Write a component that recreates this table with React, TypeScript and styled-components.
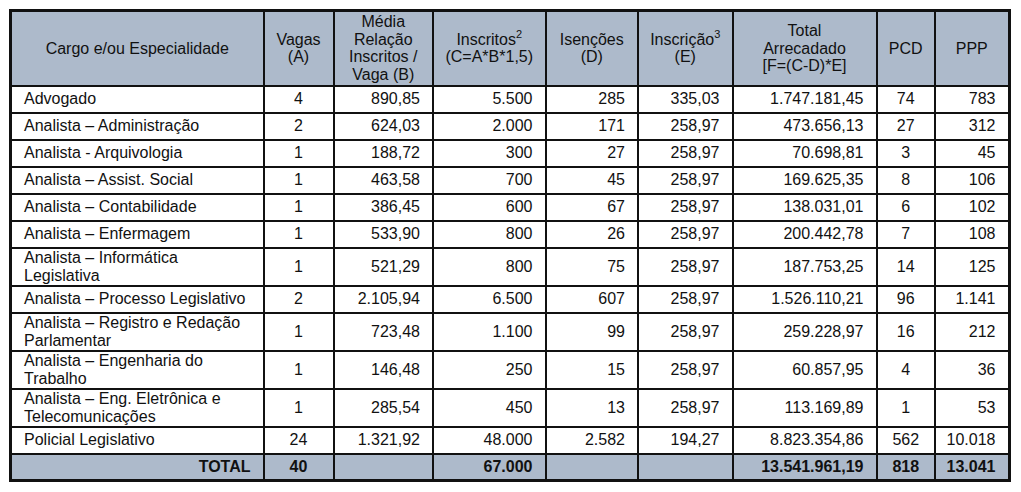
import React from "react";
import styled, { createGlobalStyle } from "styled-components";

const Global = createGlobalStyle`
  html, body { margin: 0; padding: 0; background: #ffffff; }
  body { font-family: "Liberation Sans", Arial, sans-serif; color: #111; }
`;

const Page = styled.div`
  padding: 9px 0 0 9px;
`;

const Table = styled.table`
  border-collapse: collapse;
  table-layout: fixed;
  width: 999px;
  border: 3px solid #111;
  font-size: 16px;
  line-height: 17.5px;
`;

const HeadRow = styled.tr`
  height: 75px;
  background: #adbacb;
`;

const HeadCell = styled.th`
  border: 2px solid #111;
  font-weight: normal;
  text-align: center;
  vertical-align: middle;
  padding: 0 4px;
  color: #111;
`;

const Sup = styled.sup`
  font-size: 11px;
  line-height: 0;
  vertical-align: 7px;
`;

const Row = styled.tr<{ $tall?: boolean }>`
  height: ${(p) => (p.$tall ? "38px" : "27px")};
  background: #fff;
`;

const TotalRow = styled.tr`
  height: 27px;
  background: #adbacb;
  font-weight: bold;
`;

const Cell = styled.td<{ $align?: "left" | "right" | "center" }>`
  border: 2px solid #111;
  padding: ${(p) => (p.$align === "left" ? "0 4px 0 12px" : p.$align === "center" ? "0 4px" : "0 12px 0 4px")};
  text-align: ${(p) => p.$align ?? "right"};
  vertical-align: middle;
  white-space: nowrap;
`;

const widths = [253, 70, 99.5, 112.5, 92.5, 94.5, 144, 58.5, 74];

type R = [string, string, string, string, string, string, string, string, string];

const rows: R[] = [
  ["Advogado", "4", "890,85", "5.500", "285", "335,03", "1.747.181,45", "74", "783"],
  ["Analista – Administração", "2", "624,03", "2.000", "171", "258,97", "473.656,13", "27", "312"],
  ["Analista - Arquivologia", "1", "188,72", "300", "27", "258,97", "70.698,81", "3", "45"],
  ["Analista – Assist. Social", "1", "463,58", "700", "45", "258,97", "169.625,35", "8", "106"],
  ["Analista – Contabilidade", "1", "386,45", "600", "67", "258,97", "138.031,01", "6", "102"],
  ["Analista – Enfermagem", "1", "533,90", "800", "26", "258,97", "200.442,78", "7", "108"],
  ["Analista – Informática\nLegislativa", "1", "521,29", "800", "75", "258,97", "187.753,25", "14", "125"],
  ["Analista – Processo Legislativo", "2", "2.105,94", "6.500", "607", "258,97", "1.526.110,21", "96", "1.141"],
  ["Analista – Registro e Redação\nParlamentar", "1", "723,48", "1.100", "99", "258,97", "259.228,97", "16", "212"],
  ["Analista – Engenharia do\nTrabalho", "1", "146,48", "250", "15", "258,97", "60.857,95", "4", "36"],
  ["Analista – Eng. Eletrônica e\nTelecomunicações", "1", "285,54", "450", "13", "258,97", "113.169,89", "1", "53"],
  ["Policial Legislativo", "24", "1.321,92", "48.000", "2.582", "194,27", "8.823.354,86", "562", "10.018"],
];

const Lines: React.FC<{ text: string }> = ({ text }) => {
  const parts = text.split("\n");
  return (
    <>
      {parts.map((p, i) => (
        <React.Fragment key={i}>
          {i > 0 && <br />}
          {p}
        </React.Fragment>
      ))}
    </>
  );
};

const aligns: ("left" | "right" | "center")[] = [
  "left", "center", "right", "right", "right", "right", "right", "center", "right",
];

export default function App() {
  return (
    <Page>
      <Global />
      <Table>
        <colgroup>
          {widths.map((w, i) => (
            <col key={i} style={{ width: w }} />
          ))}
        </colgroup>
        <thead>
          <HeadRow>
            <HeadCell>Cargo e/ou Especialidade</HeadCell>
            <HeadCell>Vagas<br />(A)</HeadCell>
            <HeadCell>Média<br />Relação<br />Inscritos /<br />Vaga (B)</HeadCell>
            <HeadCell>Inscritos<Sup>2</Sup><br />(C=A*B*1,5)</HeadCell>
            <HeadCell>Isenções<br />(D)</HeadCell>
            <HeadCell>Inscrição<Sup>3</Sup><br />(E)</HeadCell>
            <HeadCell>Total<br />Arrecadado<br />[F=(C-D)*E]</HeadCell>
            <HeadCell>PCD</HeadCell>
            <HeadCell>PPP</HeadCell>
          </HeadRow>
        </thead>
        <tbody>
          {rows.map((r, i) => (
            <Row key={i} $tall={r[0].includes("\n")}>
              {r.map((c, j) => (
                <Cell key={j} $align={aligns[j]}>
                  <Lines text={c} />
                </Cell>
              ))}
            </Row>
          ))}
          <TotalRow>
            <Cell $align="right">TOTAL</Cell>
            <Cell $align="center">40</Cell>
            <Cell />
            <Cell>67.000</Cell>
            <Cell />
            <Cell />
            <Cell>13.541.961,19</Cell>
            <Cell $align="center">818</Cell>
            <Cell>13.041</Cell>
          </TotalRow>
        </tbody>
      </Table>
    </Page>
  );
}
